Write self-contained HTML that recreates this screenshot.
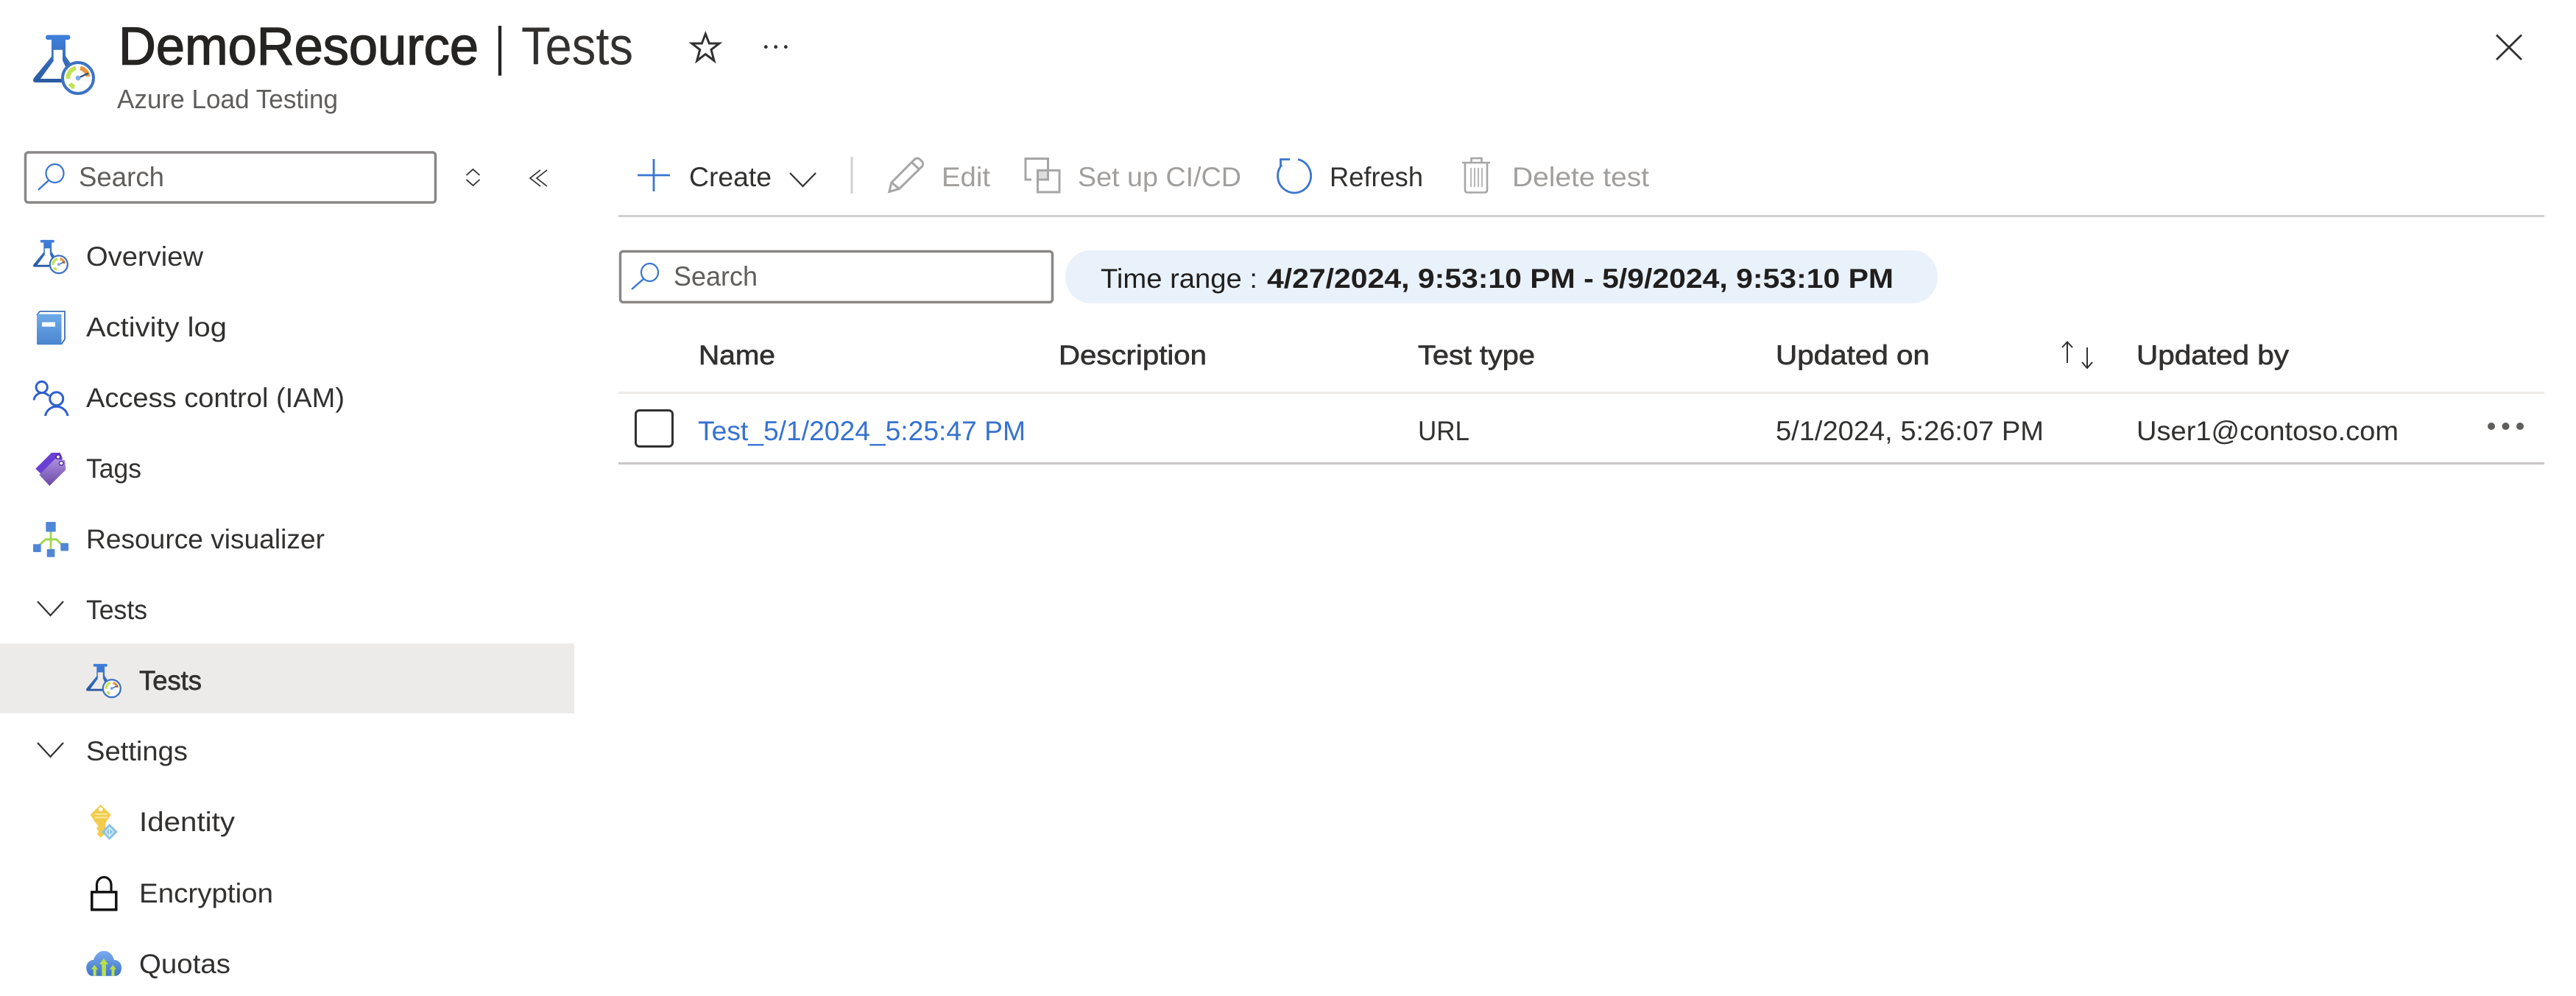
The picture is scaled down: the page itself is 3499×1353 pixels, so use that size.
<!DOCTYPE html>
<html lang="en">
<head>
<meta charset="utf-8">
<title>DemoResource | Tests</title>
<style>
html,body{margin:0;padding:0;background:#fff;width:3499px;height:1353px;overflow:hidden}
svg{display:block}
text{font-family:"Liberation Sans",sans-serif;font-size:37px;fill:#323130;white-space:pre}
.semi{stroke:#323130;stroke-width:.7px}
.dis{fill:#a19f9d}
.mut{fill:#605e5c}
</style>
</head>
<body>
<svg xmlns="http://www.w3.org/2000/svg" width="3499" height="1353" viewBox="0 0 3499 1353">
<defs>
<linearGradient id="fg" x1="0" y1="0" x2="0" y2="1"><stop offset="0" stop-color="#3f7ed8"/><stop offset="1" stop-color="#2a5a9e"/></linearGradient>
<linearGradient id="bk" x1="0" y1="0" x2="0" y2="1"><stop offset="0" stop-color="#6fabea"/><stop offset="1" stop-color="#4a85d0"/></linearGradient>
<linearGradient id="tg" x1="0" y1="0" x2="0" y2="1"><stop offset="0" stop-color="#ad8fdf"/><stop offset="1" stop-color="#6a4aa8"/></linearGradient>
<linearGradient id="cl" x1="0" y1="0" x2="0" y2="1"><stop offset="0" stop-color="#7cabee"/><stop offset="1" stop-color="#3f74c8"/></linearGradient>
<g id="flask">
  <rect x="62" y="47.5" width="33.500" height="6.500" rx="3" fill="#3f7ed8"/>
  <path d="M70 53H89V76L97 88L90 93L85 82V67.700H72.700V83L55 107H85V112H49Q43 112 46 106L70 76.700Z" fill="url(#fg)"/>
  <circle cx="106" cy="106" r="21" fill="#fff" stroke="#3d72c4" stroke-width="4"/>
  <path d="M92.500 107A13.500 13.500 0 0 1 103 92.500M95 113.500A13.500 13.500 0 0 0 101 118.500" fill="none" stroke="#c4e354" stroke-width="6"/>
  <path d="M109 92.500A13.500 13.500 0 0 1 119.500 104" fill="none" stroke="#e8973f" stroke-width="6"/>
  <path d="M106 106L120 99.500" stroke="#1f4d8c" stroke-width="2.200"/>
  <circle cx="106" cy="106" r="3.400" fill="#7fa9ee"/>
</g>
<path id="chev" d="M0 0L17.500 19L35 0" fill="none" stroke="#323130" stroke-width="2.200"/>
</defs>

<!-- Header -->
<use href="#flask"/>
<text x="161" y="87.500" style="font-size:72px;fill:#252423;stroke:#252423;stroke-width:1.400px" textLength="489" lengthAdjust="spacingAndGlyphs">DemoResource</text>
<text x="672" y="87.500" style="font-size:72px;fill:#252423" textLength="14" lengthAdjust="spacingAndGlyphs">|</text>
<text x="708" y="87.500" style="font-size:72px;fill:#323130" textLength="152" lengthAdjust="spacingAndGlyphs">Tests</text>
<text x="159" y="147" class="mut" style="font-size:36px" textLength="300" lengthAdjust="spacingAndGlyphs">Azure Load Testing</text>
<path d="M958.300 46L963.300 59H977L966 67.500L970 82.500L958.300 73.500L946.700 82.500L950.700 67.500L939.700 59H953.300Z" fill="none" stroke="#323130" stroke-width="3"/>
<circle cx="1040.300" cy="63.700" r="2.400" fill="#323130"/><circle cx="1053.700" cy="63.700" r="2.400" fill="#323130"/><circle cx="1067.300" cy="63.700" r="2.400" fill="#323130"/>
<path d="M3391 47.500L3425 81M3425 47.500L3391 81" stroke="#323130" stroke-width="2.800" fill="none"/>

<!-- Sidebar search -->
<rect x="34.500" y="207" width="557" height="68" rx="4" fill="#fff" stroke="#8a8886" stroke-width="3.500"/>
<ellipse cx="74.500" cy="235.500" rx="12" ry="12.500" fill="none" stroke="#3a75d4" stroke-width="2.200"/>
<path d="M66 245L52 258" stroke="#3a75d4" stroke-width="2.400" fill="none"/>
<text x="107" y="253" class="mut" textLength="116" lengthAdjust="spacingAndGlyphs">Search</text>
<path d="M633.500 238L642.500 230L651.500 238M633.500 244L642.500 252L651.500 244" fill="none" stroke="#323130" stroke-width="1.800"/>
<path d="M734 231L720 242L734 253M743 231L729 242L743 253" fill="none" stroke="#323130" stroke-width="1.700"/>

<!-- Sidebar items -->
<use href="#flask" transform="translate(19.400 298.800) scale(.57)"/>
<text x="117" y="361" textLength="159" lengthAdjust="spacingAndGlyphs">Overview</text>

<path d="M54 423H88V461L83 468" fill="none" stroke="#3a6fb8" stroke-width="1.800"/>
<path d="M54 423L50 428" fill="none" stroke="#3a6fb8" stroke-width="1.800"/>
<rect x="50" y="426.700" width="33.500" height="41.500" rx="1.500" fill="url(#bk)"/>
<rect x="57" y="437.700" width="18" height="6" fill="#fff"/>
<text x="117" y="457" textLength="191" lengthAdjust="spacingAndGlyphs">Activity log</text>

<g fill="none" stroke="#2f5fd0" stroke-width="3">
<circle cx="56.700" cy="526" r="7.600"/>
<path d="M46 543.500A11.500 11.500 0 0 1 66.500 538"/>
<circle cx="76.700" cy="541.700" r="9"/>
<path d="M61.500 565A15.500 15.500 0 0 1 92 565"/>
</g>
<text x="117" y="553" textLength="351" lengthAdjust="spacingAndGlyphs">Access control (IAM)</text>

<path d="M48.300 636.700L70 615H81.700L85 623L60 648Z" fill="#6b3fd4"/>
<path d="M53.300 645L75 623.300L88.300 625L89.300 638.300L67.300 660Z" fill="url(#tg)"/>
<circle cx="79" cy="620.700" r="2.800" fill="#fff" stroke="#3f218f" stroke-width="1.400"/>
<circle cx="83.300" cy="629.300" r="2.800" fill="#fff" stroke="#4b2a9e" stroke-width="1.400"/>
<text x="117" y="649" textLength="75" lengthAdjust="spacingAndGlyphs">Tags</text>

<path d="M69 722V746M52 742L61.700 732.700H76.700L86 742" fill="none" stroke="#9fd64b" stroke-width="2.800"/>
<g fill="#4f86d8"><rect x="62.300" y="709" width="13.400" height="13.400" rx="1"/><rect x="45" y="739.300" width="10.700" height="10.700" rx="1"/><rect x="82.300" y="737.700" width="10.700" height="10.700" rx="1"/><rect x="63.700" y="746" width="10.700" height="10.700" rx="1"/></g>
<text x="117" y="745" textLength="324" lengthAdjust="spacingAndGlyphs">Resource visualizer</text>

<use href="#chev" transform="translate(51 817)"/>
<text x="117" y="841" textLength="83" lengthAdjust="spacingAndGlyphs">Tests</text>

<rect x="0" y="874" width="780" height="95" fill="#edebe9"/>
<use href="#flask" transform="translate(91.400 874.800) scale(.57)"/>
<text x="189" y="937" class="semi" textLength="85" lengthAdjust="spacingAndGlyphs">Tests</text>

<use href="#chev" transform="translate(51 1009)"/>
<text x="117" y="1033" textLength="138" lengthAdjust="spacingAndGlyphs">Settings</text>

<path d="M136.700 1093L150.700 1106.700L143.500 1118V1125L141 1128L143 1132L136.700 1138L132 1133L134 1129L131 1125.500L133.500 1122L130 1118L122.700 1106.700Z" fill="#f2cc4e"/>
<circle cx="136.700" cy="1099.300" r="2.800" fill="#fff"/>
<path d="M129 1106H146M129 1110.500H146" stroke="#fae69a" stroke-width="2" fill="none"/>
<path d="M148.700 1119L160 1130L148.700 1141L138 1130Z" fill="#8cc3e4"/>
<path d="M148.700 1124V1136M143.500 1130L148.700 1124L154 1130L148.700 1136Z" fill="none" stroke="#e5f3fa" stroke-width="1.200"/>
<text x="189" y="1129" textLength="130" lengthAdjust="spacingAndGlyphs">Identity</text>

<rect x="124.800" y="1211.800" width="33" height="24" fill="none" stroke="#111" stroke-width="3.500"/>
<path d="M131.500 1210V1201A9.800 10.500 0 0 1 151 1201V1210" fill="none" stroke="#111" stroke-width="3.200"/>
<text x="189" y="1226" textLength="182" lengthAdjust="spacingAndGlyphs">Encryption</text>

<path d="M117.300 1314.500C117.300 1308 122 1304 127 1304C129.500 1296 135 1291.700 141 1291.700C147.500 1291.700 153 1296 155 1304C160.500 1304 165 1308 165 1314.500C165 1320.500 162 1325.700 157 1325.700H125C120.500 1325.700 117.300 1320.500 117.300 1314.500Z" fill="url(#cl)"/>
<path d="M141 1301.700L147 1310H144V1325.700H138.300V1310H135ZM128.300 1310.700L133.300 1316.700H130.700V1325.700H126.700V1316.700H124ZM153.300 1310.700L158 1316.700H155.500V1325.700H151.500V1316.700H148.700Z" fill="#b5e04a"/>
<text x="189" y="1322" textLength="124" lengthAdjust="spacingAndGlyphs">Quotas</text>

<!-- Toolbar -->
<path d="M888 216V260M866 238H910" stroke="#3a75d4" stroke-width="2.800" fill="none"/>
<text x="936" y="253" textLength="112" lengthAdjust="spacingAndGlyphs">Create</text>
<path d="M1073 235L1090.500 253L1108 235" fill="none" stroke="#323130" stroke-width="2.200"/>
<rect x="1155.500" y="213" width="3" height="50" fill="#d2d0ce"/>

<g fill="none" stroke="#a6a6a6" stroke-width="3">
<path d="M1207.800 260.500L1211 248L1241.700 217A5.500 5.500 0 0 1 1249 216L1252.500 219.500A5.500 5.500 0 0 1 1252.500 226L1221.500 256.500Z"/>
<path d="M1211 248L1221.500 256.500M1238 220L1249.500 231"/>
<path d="M1401 244H1393V215.500H1423.500V231"/>
<rect x="1409.500" y="231.500" width="29.500" height="29.500"/>
<rect x="1409.500" y="231.500" width="14" height="12.500" fill="#ddd"/>
</g>
<text x="1279" y="253" class="dis" textLength="66" lengthAdjust="spacingAndGlyphs">Edit</text>
<text x="1464" y="253" class="dis" textLength="222" lengthAdjust="spacingAndGlyphs">Set up CI/CD</text>

<path d="M1763 216.500A22.500 23 0 1 1 1741 224" fill="none" stroke="#3a75d4" stroke-width="2.800"/>
<path d="M1739.500 226V216.500H1752" fill="none" stroke="#3a75d4" stroke-width="2.800"/>
<text x="1806" y="253" textLength="127" lengthAdjust="spacingAndGlyphs">Refresh</text>

<g fill="none" stroke="#a6a6a6" stroke-width="2.600">
<path d="M1986 221H2024M1998.500 220V215H2012.500V220"/>
<path d="M1990 222V258Q1990 261.500 1993.500 261.500H2016.500Q2020 261.500 2020 258V222"/>
<path d="M1998 228V254M2003 228V254M2008 228V254M2013 228V254" stroke-width="1.600"/>
</g>
<text x="2054" y="253" class="dis" textLength="186" lengthAdjust="spacingAndGlyphs">Delete test</text>
<rect x="840" y="292" width="2616" height="3" fill="#d2d0ce"/>

<!-- Filters -->
<rect x="842.500" y="341.500" width="587" height="69" rx="4" fill="#fff" stroke="#8a8886" stroke-width="3.500"/>
<ellipse cx="882.500" cy="370" rx="11.500" ry="12" fill="none" stroke="#3a75d4" stroke-width="2.200"/>
<path d="M874 379L858 393" stroke="#3a75d4" stroke-width="2.400" fill="none"/>
<text x="915" y="388" class="mut" textLength="114" lengthAdjust="spacingAndGlyphs">Search</text>

<rect x="1447" y="340" width="1185" height="72" rx="34" ry="36" fill="#e9f1fa"/>
<text x="1495" y="391" style="fill:#201f1e" textLength="213" lengthAdjust="spacingAndGlyphs">Time range :</text>
<text x="1721" y="391" style="font-weight:700;fill:#201f1e" textLength="851" lengthAdjust="spacingAndGlyphs">4/27/2024, 9:53:10 PM - 5/9/2024, 9:53:10 PM</text>

<!-- Table header -->
<text x="949" y="495" class="semi" textLength="104" lengthAdjust="spacingAndGlyphs">Name</text>
<text x="1438" y="495" class="semi" textLength="201" lengthAdjust="spacingAndGlyphs">Description</text>
<text x="1926" y="495" class="semi" textLength="159" lengthAdjust="spacingAndGlyphs">Test type</text>
<text x="2412" y="495" class="semi" textLength="209" lengthAdjust="spacingAndGlyphs">Updated on</text>
<path d="M2808 465V493M2801 472L2808 464.500L2815 472M2835 472V499.500M2828 492L2835 500L2842 492" fill="none" stroke="#323130" stroke-width="2"/>
<text x="2902" y="495" class="semi" textLength="207" lengthAdjust="spacingAndGlyphs">Updated by</text>
<rect x="840" y="532" width="2616" height="3" fill="#edebe9"/>

<!-- Row -->
<rect x="863.500" y="557.500" width="50" height="49" rx="5" fill="#fff" stroke="#323130" stroke-width="3"/>
<text x="948" y="598" style="fill:#3672d0" textLength="445" lengthAdjust="spacingAndGlyphs">Test_5/1/2024_5:25:47 PM</text>
<text x="1926" y="598" textLength="70" lengthAdjust="spacingAndGlyphs">URL</text>
<text x="2412" y="598" textLength="364" lengthAdjust="spacingAndGlyphs">5/1/2024, 5:26:07 PM</text>
<text x="2902" y="598" textLength="356" lengthAdjust="spacingAndGlyphs">User1@contoso.com</text>
<circle cx="3384" cy="579" r="5" fill="#605e5c"/><circle cx="3403.500" cy="579" r="5" fill="#605e5c"/><circle cx="3423" cy="579" r="5" fill="#605e5c"/>
<rect x="840" y="628" width="2616" height="3" fill="#c8c6c4"/>
</svg>
</body>
</html>
